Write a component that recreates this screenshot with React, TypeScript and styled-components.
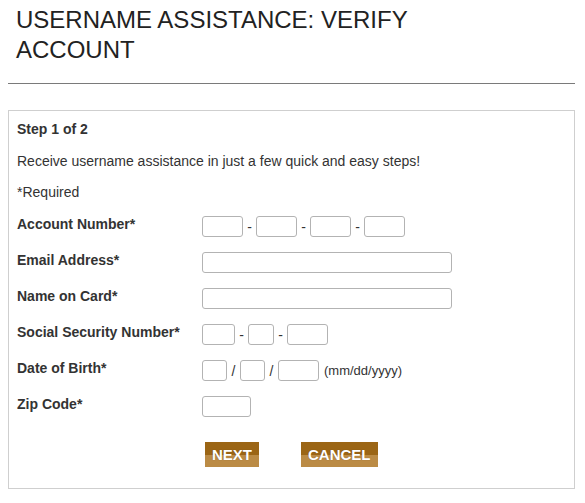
import React from "react";
import styled, { createGlobalStyle } from "styled-components";

const GlobalStyle = createGlobalStyle`
  html, body { margin: 0; padding: 0; background: #fff; }
  body {
    font-family: "Liberation Sans", Arial, Helvetica, sans-serif;
    color: #333;
    font-size: 14px;
  }
  * { box-sizing: border-box; }
`;

const Page = styled.div`
  padding: 0 10px 0 8px;
`;

const Title = styled.h1`
  margin: 0;
  max-width: 470px;
  padding: 5px 8px 0 8px;
  font-size: 24px;
  line-height: 30px;
  font-weight: normal;
  color: #222;
`;

const Divider = styled.div`
  margin-top: 18px;
  border-top: 1px solid #7a7a7a;
`;

const FormBox = styled.form`
  margin-top: 26px;
  border: 1px solid #cfcfcf;
  padding: 9px 8px 21px;
`;

const StepHeading = styled.div`
  font-weight: bold;
  font-size: 14px;
  line-height: 18px;
`;

const Para = styled.p<{ $gap: number }>`
  margin: ${(p) => p.$gap}px 0 0;
  font-size: 14px;
  line-height: 18px;
`;

const Rows = styled.div`
  margin-top: 14px;
  display: flex;
  flex-direction: column;
  gap: 14px;
`;

const Row = styled.div`
  display: flex;
  align-items: flex-start;
  min-height: 22px;
`;

const Label = styled.label`
  width: 185px;
  flex: none;
  font-weight: bold;
  font-size: 14px;
  line-height: 18px;
`;

const Fields = styled.div`
  display: flex;
  align-items: center;
  margin-top: 1px;
`;

const Input = styled.input<{ $w: number }>`
  width: ${(p) => p.$w}px;
  height: 21px;
  border: 1px solid #b3b3b3;
  border-radius: 3px;
  padding: 0 4px;
  font: inherit;
  background: #fff;
  outline: none;
`;

const Sep = styled.span`
  width: 13px;
  text-align: center;
  font-size: 14px;
  line-height: 18px;
`;

const Hint = styled.span`
  margin-left: 5px;
  font-size: 13px;
  line-height: 18px;
`;

const Buttons = styled.div`
  margin-top: 25px;
  padding-left: 188px;
  display: flex;
  gap: 42px;
`;

const Button = styled.button`
  height: 25px;
  padding: 0 7px;
  border: none;
  border-radius: 0;
  background: linear-gradient(to bottom, #9b6515 0%, #9b6515 50%, #bb8b45 50%, #bb8b45 100%);
  color: #fff;
  font-family: "Liberation Sans", Arial, Helvetica, sans-serif;
  font-weight: bold;
  font-size: 15px;
  line-height: 25px;
  text-shadow: 0 0 1px rgba(60, 30, 0, 0.4);
  cursor: pointer;
`;

export default function App() {
  return (
    <>
      <GlobalStyle />
      <Page>
        <Title>USERNAME ASSISTANCE: VERIFY ACCOUNT</Title>
        <Divider />
        <FormBox onSubmit={(e) => e.preventDefault()}>
          <StepHeading>Step 1 of 2</StepHeading>
          <Para $gap={14}>Receive username assistance in just a few quick and easy steps!</Para>
          <Para $gap={13}>*Required</Para>
          <Rows>
            <Row>
              <Label>Account Number*</Label>
              <Fields>
                <Input $w={41} />
                <Sep>-</Sep>
                <Input $w={41} />
                <Sep>-</Sep>
                <Input $w={41} />
                <Sep>-</Sep>
                <Input $w={41} />
              </Fields>
            </Row>
            <Row>
              <Label>Email Address*</Label>
              <Fields>
                <Input $w={250} />
              </Fields>
            </Row>
            <Row>
              <Label>Name on Card*</Label>
              <Fields>
                <Input $w={250} />
              </Fields>
            </Row>
            <Row>
              <Label>Social Security Number*</Label>
              <Fields>
                <Input $w={33} />
                <Sep>-</Sep>
                <Input $w={26} />
                <Sep>-</Sep>
                <Input $w={41} />
              </Fields>
            </Row>
            <Row>
              <Label>Date of Birth*</Label>
              <Fields>
                <Input $w={25} />
                <Sep>/</Sep>
                <Input $w={25} />
                <Sep>/</Sep>
                <Input $w={41} />
                <Hint>(mm/dd/yyyy)</Hint>
              </Fields>
            </Row>
            <Row>
              <Label>Zip Code*</Label>
              <Fields>
                <Input $w={49} />
              </Fields>
            </Row>
          </Rows>
          <Buttons>
            <Button type="submit">NEXT</Button>
            <Button type="button">CANCEL</Button>
          </Buttons>
        </FormBox>
      </Page>
    </>
  );
}
